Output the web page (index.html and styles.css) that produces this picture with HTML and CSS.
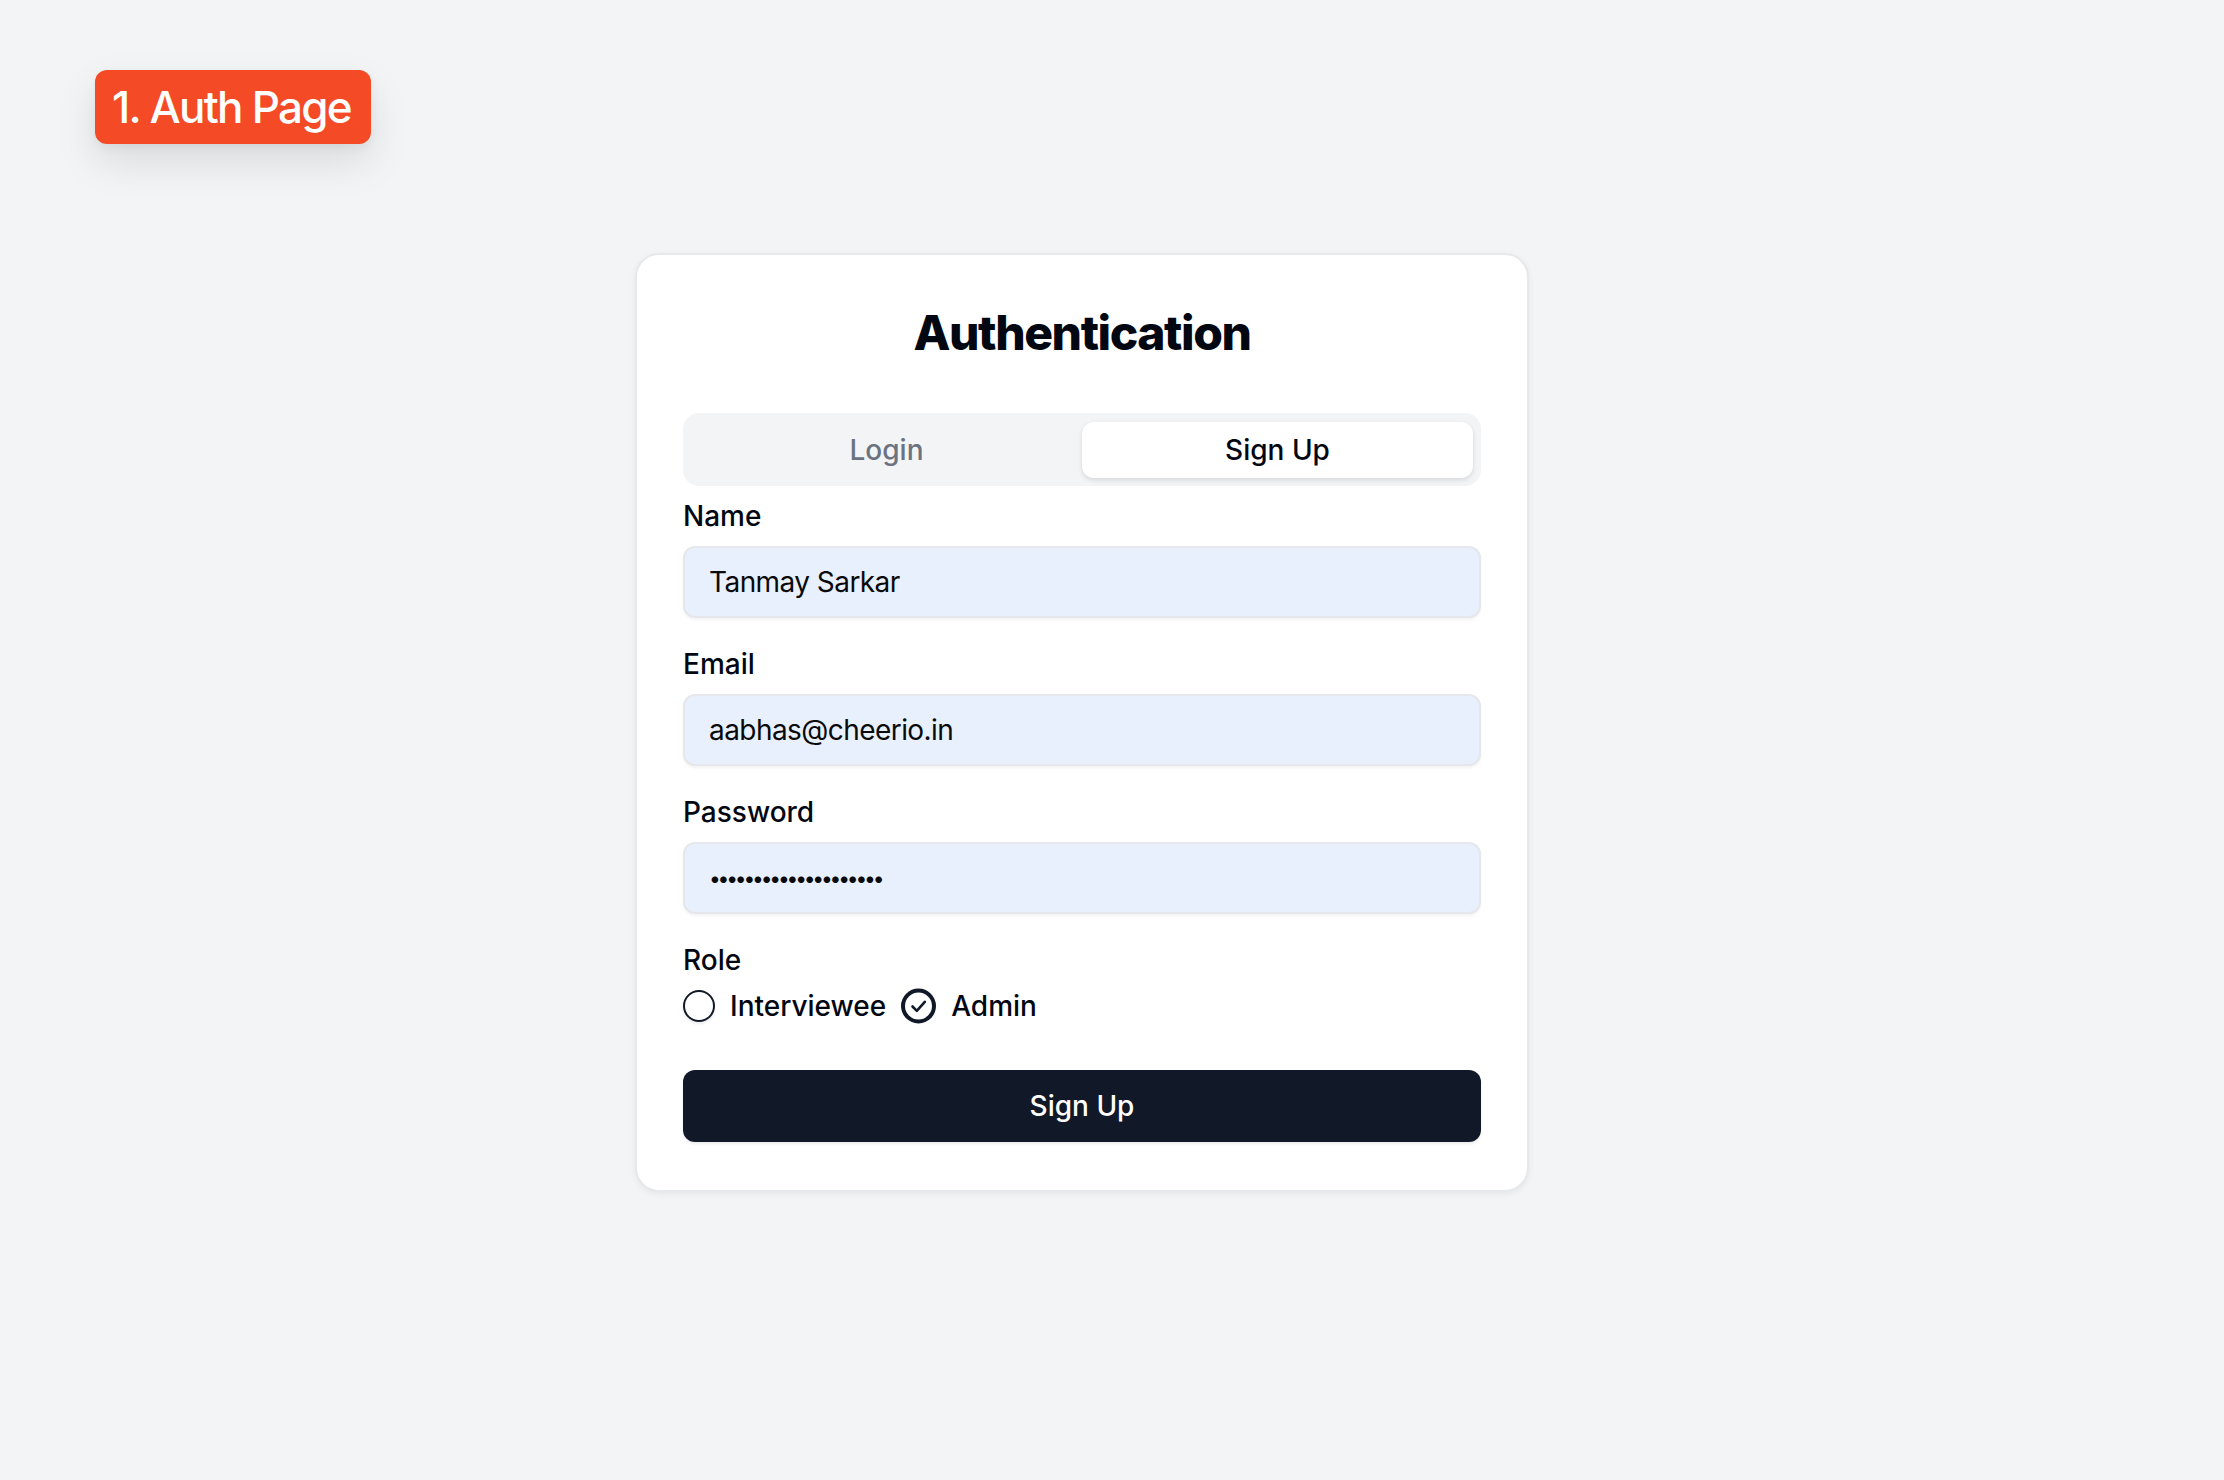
FILE: index.html
```html
<!DOCTYPE html>
<html lang="en">
<head>
<meta charset="utf-8">
<title>Auth Page</title>
<link rel="stylesheet" href="styles.css">
</head>
<body>
<div class="page">
  <div class="badge-row"><div class="badge">1. Auth Page</div></div>
  <main class="stage">
    <section class="card">
      <h1 class="title">Authentication</h1>
      <div class="tabs">
        <button class="tab" type="button">Login</button>
        <button class="tab tab-active" type="button">Sign Up</button>
      </div>
      <form class="form">
        <div class="field">
          <label class="label" for="name">Name</label>
          <input class="input" id="name" type="text" value="Tanmay Sarkar">
        </div>
        <div class="field">
          <label class="label" for="email">Email</label>
          <input class="input" id="email" type="email" value="aabhas@cheerio.in">
        </div>
        <div class="field">
          <label class="label" for="password">Password</label>
          <input class="input input-pw" id="password" type="password" value="aaaaaaaaaaaaaaaaaaaa">
        </div>
        <div class="field">
          <span class="label">Role</span>
          <div class="radios">
            <label class="radio-item"><span class="radio"></span><span class="radio-text">Interviewee</span></label>
            <label class="radio-item">
              <svg class="radio-checked" width="35" height="36" viewBox="0 0 35 36" aria-hidden="true">
                <circle cx="17.5" cy="18" r="15.5" fill="none" stroke="#111827" stroke-width="4"/>
                <path d="M11.5 18.5 L15.8 22.8 L23.8 13.8" fill="none" stroke="#111827" stroke-width="2.6" stroke-linecap="round" stroke-linejoin="round"/>
              </svg>
              <span class="radio-text">Admin</span>
            </label>
          </div>
        </div>
        <button class="submit" type="button">Sign Up</button>
      </form>
    </section>
  </main>
</div>
</body>
</html>
```

FILE: styles.css
```css
* { box-sizing: border-box; }

html, body {
  margin: 0;
  padding: 0;
  background: #f3f4f6;
}

body {
  font-family: Inter, "Noto Sans", "Liberation Sans", sans-serif;
  color: #0a0a0a;
  min-height: 1480px;
}

.page {
  padding: 70px 0 0 95px;
}

.badge-row {
  display: flex;
}

.badge {
  background: #f44a26;
  color: #ffffff;
  font-size: 44px;
  font-weight: 500;
  line-height: 52px;
  letter-spacing: -0.04em;
  padding: 11px 20px 11px 17px;
  border-radius: 12px;
  box-shadow: 0 18px 40px rgba(0, 0, 0, 0.10), 0 4px 10px rgba(0, 0, 0, 0.05);
}

.stage {
  padding-left: 540px;
  margin-top: 109px;
}

.card {
  width: 894px;
  background: #ffffff;
  border: 2px solid #e7e8eb;
  border-radius: 24px;
  padding: 46px 46px 48px;
  box-shadow: 0 2px 6px rgba(0, 0, 0, 0.06);
}

.title {
  margin: 0;
  text-align: center;
  font-size: 48px;
  line-height: 64px;
  font-weight: 800;
  letter-spacing: -0.03em;
  color: #030712;
}

.tabs {
  margin-top: 48px;
  display: grid;
  grid-template-columns: 1fr 1fr;
  background: #f3f4f6;
  border-radius: 16px;
  padding: 9px 8px 8px;
}

.tab {
  height: 56px;
  border: 0;
  background: transparent;
  font-family: inherit;
  font-size: 28px;
  font-weight: 500;
  color: #6b7280;
  border-radius: 12px;
  padding: 0;
}

.tab-active {
  background: #ffffff;
  color: #030712;
  box-shadow: 0 2px 5px rgba(0, 0, 0, 0.12);
}

.form {
  margin-top: 16px;
  display: flex;
  flex-direction: column;
  gap: 32px;
}

.field {
  display: flex;
  flex-direction: column;
  gap: 16px;
}

.label {
  font-size: 28px;
  line-height: 28px;
  font-weight: 500;
  color: #030712;
}

.input {
  height: 72px;
  width: 100%;
  border: 2px solid #e5e7eb;
  border-radius: 12px;
  background: #e8f0fe;
  padding: 0 24px;
  font-family: inherit;
  font-size: 28px;
  letter-spacing: -0.02em;
  color: #0a0a0a;
  box-shadow: 0 2px 3px rgba(0, 0, 0, 0.05);
  outline: none;
}

.input-pw {
  font-size: 21px;
  letter-spacing: -3.2px;
}

.radios {
  display: flex;
  align-items: center;
  gap: 15px;
  height: 32px;
}

.radio-item {
  display: flex;
  align-items: center;
  gap: 15px;
}

.radio {
  width: 32px;
  height: 32px;
  border: 2px solid #111827;
  border-radius: 50%;
  box-shadow: 0 2px 3px rgba(0, 0, 0, 0.08);
}

.radio-checked {
  display: block;
  flex: none;
}

.radio-text {
  font-size: 28px;
  font-weight: 500;
  color: #030712;
}

.submit {
  margin-top: 16px;
  height: 72px;
  width: 100%;
  border: 0;
  border-radius: 12px;
  background: #111827;
  color: #ffffff;
  font-family: inherit;
  font-size: 28px;
  font-weight: 500;
  box-shadow: 0 2px 3px rgba(0, 0, 0, 0.08);
}
```
